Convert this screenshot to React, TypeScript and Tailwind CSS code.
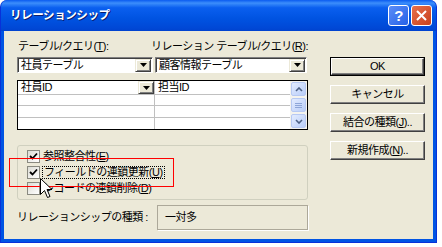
import React from "react";

const U = ({ c }: { c: string }) => <span className="underline underline-offset-1">{c}</span>;

const DropBtn = () => (
  <div className="w-[16px] h-[13px] bg-[#ece9d8] border border-t-[#ece9d8] border-l-[#ece9d8] border-r-[#404040] border-b-[#404040] shadow-[inset_1px_1px_0_#ffffff,inset_-1px_-1px_0_#808080] flex items-center justify-center">
    <svg width="7" height="4" viewBox="0 0 7 4">
      <path d="M0 0h7L3.5 4z" fill="#000" />
    </svg>
  </div>
);

const Combo = ({ text, w }: { text: string; w: string }) => (
  <div className={`${w} h-[16px] flex items-center bg-white border border-t-[#808080] border-l-[#808080] border-r-white border-b-white shadow-[inset_1px_1px_0_#404040]`}>
    <span className="flex-1 pl-[3px] leading-none whitespace-nowrap">{text}</span>
    <div className="mr-[1px]">
      <DropBtn />
    </div>
  </div>
);

const XpBtn = ({ children, def }: { children: React.ReactNode; def?: boolean }) => (
  <div className={`w-[95px] h-[19px] ${def ? "border border-black" : ""}`}>
    <div className="w-full h-full flex items-center justify-center leading-none whitespace-nowrap bg-[#ece9d8] border border-t-white border-l-white border-r-[#404040] border-b-[#404040] shadow-[inset_-1px_-1px_0_#808080]">
      {children}
    </div>
  </div>
);

const ScrollBtn = ({ kind }: { kind: "up" | "mid" | "down" }) => (
  <div className="w-[15px] h-[14px] rounded-[2px] border border-[#b7c9f3] bg-[linear-gradient(135deg,#e3ecff,#b9cdf8)] flex items-center justify-center">
    {kind === "up" && (
      <svg width="8" height="5" viewBox="0 0 8 5">
        <path d="M1 4L4 1L7 4" stroke="#4d6185" strokeWidth="1.6" fill="none" />
      </svg>
    )}
    {kind === "down" && (
      <svg width="8" height="5" viewBox="0 0 8 5">
        <path d="M1 1L4 4L7 1" stroke="#4d6185" strokeWidth="1.6" fill="none" />
      </svg>
    )}
    {kind === "mid" && (
      <svg width="7" height="7" viewBox="0 0 7 7">
        <path d="M0 1.5h7M0 3.5h7M0 5.5h7" stroke="#8ea6d8" strokeWidth="1" />
      </svg>
    )}
  </div>
);

const Check = ({ on }: { on?: boolean }) => (
  <div className="w-[13px] h-[13px] shrink-0 border border-[#8a8a80] bg-[linear-gradient(135deg,#dcdcd4,#ffffff)] flex items-center justify-center">
    {on && (
      <svg width="9" height="9" viewBox="0 0 9 9">
        <path d="M1 4L3.5 6.5L8 1.5" stroke="#000" strokeWidth="1.8" fill="none" />
      </svg>
    )}
  </div>
);

export default function App() {
  return (
    <div className="relative w-[442px] h-[247px] bg-white font-['Liberation_Sans','Noto_Sans_CJK_JP',sans-serif] text-black text-[11px] tracking-[-0.5px]">
      <div className="w-[437px] h-[243px] flex flex-col rounded-t-[7px] bg-[#0054e3] border-l border-r border-b border-[#0831d9]">
        {/* title bar */}
        <div className="h-[31px] rounded-t-[7px] flex items-center bg-[linear-gradient(180deg,#0a5bf0_0%,#3c8efb_10%,#0a5fef_25%,#0053e1_60%,#0048d6_90%,#0043cf_100%)]">
          <span className="ml-[9px] text-white font-bold text-[11.5px] tracking-[-0.4px] [text-shadow:1px_1px_0_#0a1e6e]">リレーションシップ</span>
          <div className="ml-auto mr-[4px] flex gap-[2px]">
            <div className="w-[21px] h-[21px] rounded-[3px] border border-white bg-[linear-gradient(135deg,#5b8df7,#2561e8)] flex items-center justify-center text-white text-[15px] font-bold leading-none">?</div>
            <div className="w-[21px] h-[21px] rounded-[3px] border border-white bg-[linear-gradient(135deg,#e8704c,#c8401c)] flex items-center justify-center">
              <svg width="11" height="11" viewBox="0 0 11 11">
                <path d="M1 1L10 10M10 1L1 10" stroke="#fff" strokeWidth="2" />
              </svg>
            </div>
          </div>
        </div>

        {/* client */}
        <div className="flex-1 mx-[3px] mb-[3px] bg-[#ece9d8] flex flex-col">
          <div className="flex pl-[13px]">
            {/* left column */}
            <div className="w-[291px] flex flex-col">
              <div className="mt-[9px] h-[12px] flex items-center leading-none whitespace-nowrap">
                <span className="w-[138px] pl-[1px]">テーブル/クエリ(<U c="T" />):</span>
                <span>リレーション テーブル/クエリ(<U c="R" />):</span>
              </div>
              <div className="mt-[5px] flex gap-[2px]">
                <Combo text="社員テーブル" w="w-[136px]" />
                <Combo text="顧客情報テーブル" w="w-[152px]" />
              </div>
              <div className="mt-[7px] h-[50px] border border-black bg-white flex">
                <div className="flex-1 flex flex-col">
                  <div className="h-[14px] flex border-b border-[#c0c0c0]">
                    <div className="w-[137px] flex items-center border-r border-[#c0c0c0]">
                      <span className="flex-1 pl-[3px] leading-none">社員ID</span>
                      <DropBtn />
                    </div>
                    <div className="flex-1 flex items-center pl-[3px] leading-none">担当ID</div>
                  </div>
                  {[0, 1, 2].map((i) => (
                    <div key={i} className={`h-[12px] flex ${i < 2 ? "border-b border-[#c0c0c0]" : ""}`}>
                      <div className="w-[137px] border-r border-[#c0c0c0]" />
                    </div>
                  ))}
                </div>
                <div className="w-[17px] bg-[#f4f3ee] flex flex-col items-center justify-between py-[1px]">
                  <ScrollBtn kind="up" />
                  <ScrollBtn kind="mid" />
                  <ScrollBtn kind="down" />
                </div>
              </div>
              <div className="mt-[15px] h-[55px] border border-[#d0d0bf] rounded-[3px] pt-[2px] pl-[9px] leading-none whitespace-nowrap">
                <div className="h-[16px] flex items-center gap-[3px]">
                  <Check on />
                  <span>参照整合性(<U c="E" />)</span>
                </div>
                <div className="h-[16px] flex items-center gap-[3px]">
                  <Check on />
                  <span className="outline outline-1 outline-dotted outline-black px-[1px]">フィールドの連鎖更新(<U c="U" />)</span>
                </div>
                <div className="h-[16px] flex items-center gap-[3px]">
                  <Check />
                  <span>レコードの連鎖削除(<U c="D" />)</span>
                </div>
              </div>
            </div>

            {/* right column */}
            <div className="ml-[22px] mt-[26px] flex flex-col gap-[9px]">
              <XpBtn def>OK</XpBtn>
              <XpBtn>キャンセル</XpBtn>
              <XpBtn>結合の種類(<U c="J" />)..</XpBtn>
              <XpBtn>新規作成(<U c="N" />)..</XpBtn>
            </div>
          </div>

          <div className="mt-[5px] ml-[13px] flex items-center leading-none whitespace-nowrap">
            <span className="w-[140px]">リレーションシップの種類 :</span>
            <div className="w-[151px] h-[25px] flex items-center pl-[7px] border border-[#aca899] shadow-[1px_1px_0_#ffffff]">一対多</div>
          </div>
        </div>
      </div>

      {/* annotation overlay */}
      <div className="absolute left-[9px] top-[158px] w-[165px] h-[29px] border border-[#ff0000]" />
      <svg className="absolute left-[40px] top-[178px]" width="13" height="21" viewBox="0 0 13 21">
        <path d="M0.5 0.5V16.5L4.5 12.5L7.5 19.5L10 18.5L7 11.5H12Z" fill="#fff" stroke="#000" strokeWidth="1" strokeLinejoin="miter" />
      </svg>
    </div>
  );
}
